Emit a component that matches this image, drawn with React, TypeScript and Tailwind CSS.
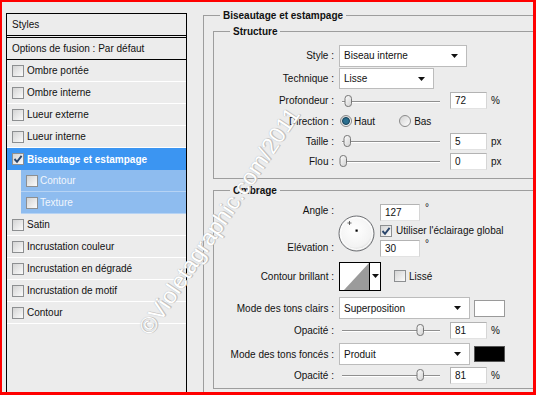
import React from "react";

type Kids = { children?: React.ReactNode };

function Checkbox({ checked = false }: { checked?: boolean }) {
  return (
    <span className="w-[12px] h-[12px] shrink-0 border border-[#8d8f91] bg-linear-to-br from-[#d4d4d4] to-[#fbfbfb] flex items-center justify-center">
      {checked && (
        <svg width="10" height="10" viewBox="0 0 10 10">
          <path d="M1.5 5 L4 7.8 L8.6 1.8" fill="none" stroke="#29456b" strokeWidth="1.9" />
        </svg>
      )}
    </span>
  );
}

function Radio({ checked = false }: { checked?: boolean }) {
  return (
    <span className="w-[12px] h-[12px] shrink-0 rounded-full border border-[#8a8a8a] bg-linear-to-br from-[#d2d2d2] to-white flex items-center justify-center">
      {checked && <span className="w-[8px] h-[8px] rounded-full bg-[#2b6f8f] border border-[#153f55]" />}
    </span>
  );
}

function Arrow() {
  return (
    <svg width="7" height="4" viewBox="0 0 7 4">
      <path d="M0 0 H7 L3.5 4 Z" fill="#111" />
    </svg>
  );
}

function Select({ value, className }: { value: string; className: string }) {
  return (
    <div className={`flex items-center justify-between bg-white border border-[#bcbcbc] pl-[4px] pr-[8px] ${className}`}>
      <span>{value}</span>
      <Arrow />
    </div>
  );
}

function Field({ value, className = "w-[37px]" }: { value: string; className?: string }) {
  return (
    <div className={`h-[17px] bg-white border border-[#b3b3b3] border-b-[#e2e2e2] border-r-[#d6d6d6] pl-[4px] flex items-center ${className}`}>
      {value}
    </div>
  );
}

function Slider({ pos }: { pos: number }) {
  return (
    <div className="relative w-[106px] h-[14px] shrink-0">
      <div className="absolute left-[3px] right-[5px] top-[7px] h-px bg-[#8f8f8f]" />
      <div className="absolute left-[3px] right-[5px] top-[8px] h-px bg-white" />
      <svg className="absolute top-px" style={{ left: pos - 4 }} width="9" height="13" viewBox="0 0 9 13">
        <defs>
          <linearGradient id="th" x1="0" y1="0" x2="1" y2="1">
            <stop offset="0" stopColor="#ffffff" />
            <stop offset="1" stopColor="#d0d0d0" />
          </linearGradient>
        </defs>
        <rect x="1" y="0.5" width="6.5" height="11" rx="3" fill="url(#th)" stroke="#777" />
      </svg>
    </div>
  );
}

function Row({ label, h, children }: { label: string; h: string } & Kids) {
  return (
    <div className={`flex items-center ${h}`}>
      <div className="w-[120px] shrink-0 text-right">{label}</div>
      <div className="ml-[5px] flex items-center">{children}</div>
    </div>
  );
}

function SliderRow({ label, h, pos, value, unit }: { label: string; h: string; pos: number; value: string; unit: string }) {
  return (
    <Row label={label} h={h}>
      <Slider pos={pos} />
      <Field value={value} className="w-[37px] ml-[5px]" />
      <span className="ml-[4px]">{unit}</span>
    </Row>
  );
}

function StyleItem({ label, sel = false }: { label: string; sel?: boolean }) {
  return (
    <div
      className={`h-[22px] flex items-center gap-[3px] pl-[5px] ${
        sel ? "bg-[#3b95f2] text-white font-bold" : "border-b border-white"
      }`}
    >
      <Checkbox checked={sel} />
      <span>{label}</span>
    </div>
  );
}

function SubItem({ label }: { label: string }) {
  return (
    <div className="ml-[14px] h-[22px] bg-[#8ebcef] border-b border-[#b6d3f4] text-[#f1f6fc] flex items-center gap-[2px] pl-[5px]">
      <Checkbox />
      <span>{label}</span>
    </div>
  );
}

function AngleDial() {
  return (
    <svg width="37" height="37" viewBox="0 0 37 37">
      <defs>
        <radialGradient id="dial" cx="0.45" cy="0.4" r="0.6">
          <stop offset="0" stopColor="#ffffff" />
          <stop offset="0.8" stopColor="#f3f3f3" />
          <stop offset="1" stopColor="#dadada" />
        </radialGradient>
      </defs>
      <circle cx="18.5" cy="18.5" r="17.5" fill="url(#dial)" stroke="#6d6f73" />
      <circle cx="18.5" cy="18.5" r="16" fill="none" stroke="#ffffff" />
      <path d="M11.5 6 V10 M9.5 8 H13.5" stroke="#444" strokeWidth="0.8" />
      <rect x="17.5" y="14.5" width="2.2" height="2.2" fill="#000" />
    </svg>
  );
}

function GlossPreview() {
  return (
    <div className="w-[42px] h-[29px] border border-black bg-white flex">
      <svg width="29" height="27" viewBox="0 0 29 27">
        <path d="M4 27 L29 0 V27 Z" fill="#9b9b9b" />
      </svg>
      <div className="flex-1 border-l border-black flex items-center justify-center">
        <Arrow />
      </div>
    </div>
  );
}

export default function App() {
  return (
    <div className="relative w-[536px] h-[395px] overflow-hidden bg-[#ececec] border-l-2 border-t-2 border-r-[3px] border-b-[3px] border-[#ff0000] font-['Liberation_Sans',Arial,sans-serif] text-[10px] leading-[13px] text-[#111] flex">
      {/* Styles list */}
      <div className="ml-[4px] mt-[11px] w-[181px] shrink-0 border-x border-t border-black flex flex-col">
        <div className="h-[24px] border-b-[3px] border-double border-black pl-[5px] flex items-center">Styles</div>
        <div className="h-[22px] border-b border-black pl-[5px] flex items-center">Options de fusion : Par défaut</div>
        <StyleItem label="Ombre portée" />
        <StyleItem label="Ombre interne" />
        <StyleItem label="Lueur externe" />
        <StyleItem label="Lueur interne" />
        <StyleItem label="Biseautage et estampage" sel />
        <SubItem label="Contour" />
        <SubItem label="Texture" />
        <StyleItem label="Satin" />
        <StyleItem label="Incrustation couleur" />
        <StyleItem label="Incrustation en dégradé" />
        <StyleItem label="Incrustation de motif" />
        <StyleItem label="Contour" />
      </div>

      {/* Settings */}
      <div className="flex-1 pl-[16px] flex flex-col">
        <fieldset className="mt-[7px] flex-1 border-l border-t border-[#9d9d9d]">
          <legend className="ml-[16px] px-[3px] font-bold">Biseautage et estampage</legend>

          <fieldset className="ml-[9px] mt-[3px] border-l border-t border-b border-[#9d9d9d] pt-[6px] pb-[7px]">
            <legend className="ml-[16px] px-[3px] font-bold">Structure</legend>
            <Row label="Style :" h="h-[23px]">
              <Select value="Biseau interne" className="w-[128px] h-[22px]" />
            </Row>
            <Row label="Technique :" h="h-[23px]">
              <Select value="Lisse" className="w-[95px] h-[21px]" />
            </Row>
            <SliderRow label="Profondeur :" h="h-[21px]" pos={9} value="72" unit="%" />
            <Row label="Direction :" h="h-[20px]">
              <span className="ml-px"><Radio checked /></span>
              <span className="ml-[2px]">Haut</span>
              <span className="ml-[24px]"><Radio /></span>
              <span className="ml-[3px]">Bas</span>
            </Row>
            <SliderRow label="Taille :" h="h-[20px]" pos={8} value="5" unit="px" />
            <SliderRow label="Flou :" h="h-[20px]" pos={4} value="0" unit="px" />
          </fieldset>

          <fieldset className="ml-[9px] mt-[5px] border-l border-t border-b border-[#9d9d9d] pb-[3px]">
            <legend className="ml-[16px] px-[3px] font-bold">Ombrage</legend>

            <div className="flex h-[60px]">
              <div className="w-[120px] shrink-0 text-right flex flex-col">
                <span className="mt-[7px]">Angle :</span>
                <span className="mt-[24px]">Elévation :</span>
              </div>
              <div className="ml-[4px] mt-[18px]">
                <AngleDial />
              </div>
              <div className="ml-[5px] pt-[7px] flex flex-col">
                <div className="flex">
                  <Field value="127" className="w-[40px]" />
                  <span className="ml-[5px] -mt-[3px]">°</span>
                </div>
                <div className="h-[19px] flex items-center">
                  <Checkbox checked />
                  <span className="ml-[4px]">Utiliser l'éclairage global</span>
                </div>
                <div className="flex">
                  <Field value="30" className="w-[40px]" />
                  <span className="ml-[5px] -mt-[3px]">°</span>
                </div>
              </div>
            </div>

            <div className="mt-[4px]">
              <Row label="Contour brillant :" h="h-[30px]">
                <GlossPreview />
                <span className="ml-[13px]"><Checkbox /></span>
                <span className="ml-[3px]">Lissé</span>
              </Row>
            </div>

            <div className="mt-[6px]">
              <Row label="Mode des tons clairs :" h="h-[22px]">
                <Select value="Superposition" className="w-[131px] h-[22px]" />
                <div className="ml-[4px] w-[31px] h-[17px] bg-white border border-[#9a9a9a]" />
              </Row>
            </div>
            <div className="mt-px">
              <SliderRow label="Opacité :" h="h-[20px]" pos={81} value="81" unit="%" />
            </div>
            <div className="mt-[3px]">
              <Row label="Mode des tons foncés :" h="h-[22px]">
                <Select value="Produit" className="w-[131px] h-[22px]" />
                <div className="ml-[4px] w-[31px] h-[16px] bg-black border border-[#555]" />
              </Row>
            </div>
            <SliderRow label="Opacité :" h="h-[20px]" pos={81} value="81" unit="%" />
          </fieldset>
        </fieldset>
      </div>

      {/* watermark */}
      <div className="pointer-events-none absolute left-[217px] top-[219px] -translate-x-1/2 -translate-y-1/2 -rotate-[56deg] whitespace-nowrap text-[23px] leading-[24px] text-white [text-shadow:0_0_1px_#a9a9a9,1px_1px_0_#c4c4c4]">
        ©Violetagraphic.com/2011
      </div>
    </div>
  );
}
